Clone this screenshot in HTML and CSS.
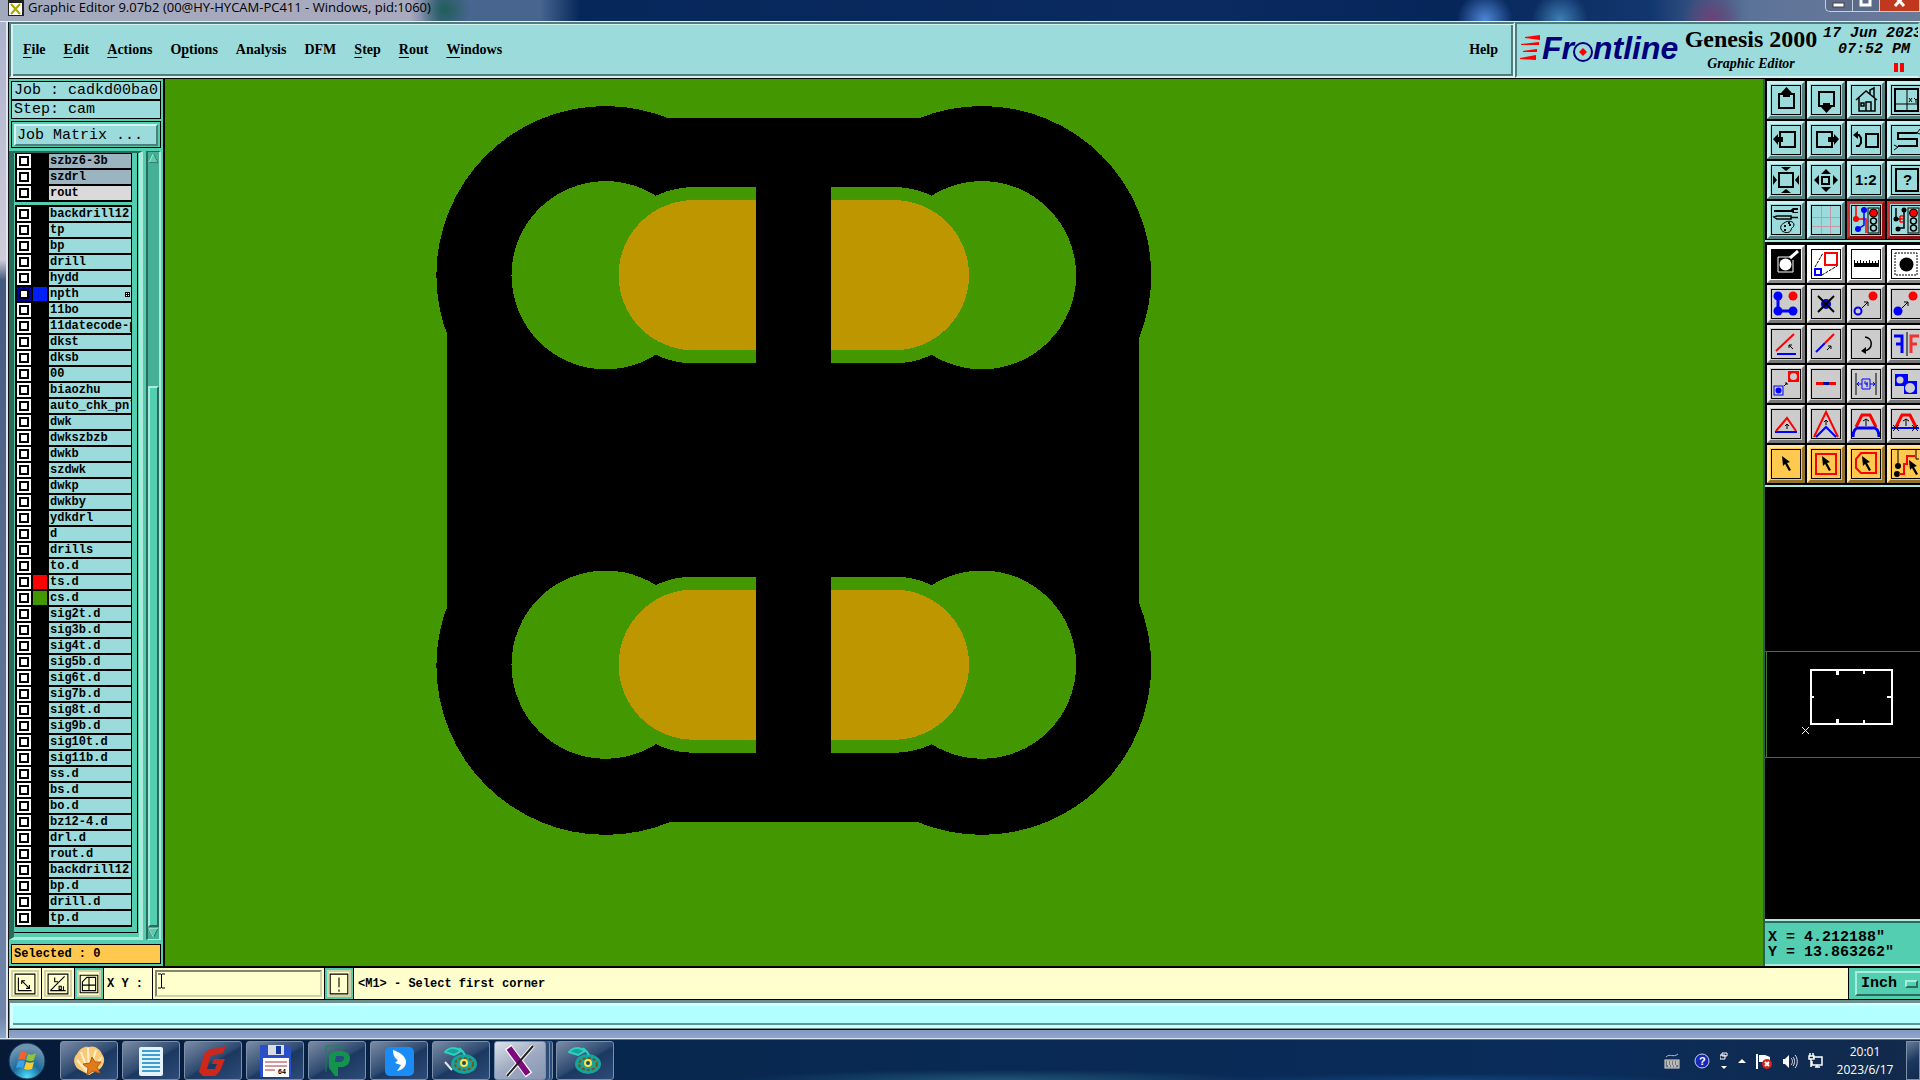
FILE: index.html
```html
<!DOCTYPE html>
<html lang="en">
<head>
  <meta charset="utf-8">
  <title>Graphic Editor</title>
  <link rel="stylesheet" href="styles.css">
</head>
<body>
  <div class="window">
    <header class="titlebar">
      <svg class="title-icon" viewBox="0 0 16 16"><rect width="16" height="16" fill="#222"/><rect x="1" y="3" width="13" height="12" fill="#fff"/><path d="M3 4L12 14M12 4L3 14" stroke="#a8a800" stroke-width="2"/></svg>
      <span class="title-text">Graphic Editor 9.07b2 (00@HY-HYCAM-PC411 - Windows, pid:1060)</span>
      <div class="window-controls">
        <button aria-label="Minimize"><svg viewBox="0 0 14 12"><rect x="1" y="3" width="11" height="4" fill="#fff" stroke="#444"/></svg></button>
        <button aria-label="Maximize"><svg viewBox="0 0 14 12"><rect x="2" y="-3" width="9" height="8" fill="none" stroke="#fff" stroke-width="3"/></svg></button>
        <button class="close" aria-label="Close"><svg viewBox="0 0 14 12"><path d="M2 -4L11 6M11 -4L2 6" stroke="#fff" stroke-width="3"/></svg></button>
      </div>
    </header>

    <div class="top">
      <nav class="menubar">
        <button><u>F</u>ile</button>
        <button><u>E</u>dit</button>
        <button><u>A</u>ctions</button>
        <button>O<u>p</u>tions</button>
        <button>Analysis</button>
        <button>DFM</button>
        <button><u>S</u>tep</button>
        <button><u>R</u>out</button>
        <button><u>W</u>indows</button>
        <button class="help">Help</button>
      </nav>
      <div class="brand">
        <svg class="logo" viewBox="0 0 162 50">
          <g fill="#f00"><path d="M5 13L20 11V16L5 14zM1 20L19 18V21L1 21zM3 27L17 25V28L3 28zM0 34L16 31V36L0 35z"/></g>
          <g class="logo-text"><text x="22" y="35">Fr</text><text x="73" y="35">ntline</text></g>
          <circle cx="63" cy="28" r="9" fill="none" stroke="#00007b" stroke-width="2"/>
          <path d="M63 24L67 28L63 32L59 28z" fill="#f00"/>
        </svg>
        <div class="product">
          <div class="product-name">Genesis 2000</div>
          <div class="product-sub">Graphic Editor</div>
        </div>
        <div class="datetime">
          <div>17 Jun 2023</div>
          <div>07:52 PM</div>
          <svg class="pause" viewBox="0 0 10 9"><path d="M0 0H4V9H0zM6 0H10V9H6z" fill="#f00"/></svg>
        </div>
      </div>
    </div>

    <main class="work">
      <aside class="sidebar">
        <div class="field">Job : cadkd00ba0</div>
        <div class="field">Step: cam</div>
        <div class="matrix"><button>Job Matrix ...</button></div>
        <div class="layers">
          <div class="layer-view">
            <div class="layer-group top-group" id="boardLayers"></div>
            <div class="layer-group" id="miscLayers"></div>
          </div>
          <div class="scrollbar">
            <svg viewBox="0 0 12 12"><rect width="12" height="12" fill="#46b096"/><path d="M6 1L11 11H1z" fill="#54ceb0" stroke="#a9ecdc"/><path d="M6 1L11 11H1" fill="none" stroke="#2b6b5b"/></svg>
            <div class="thumb"></div>
            <svg viewBox="0 0 12 12"><rect width="12" height="12" fill="#46b096"/><path d="M1 1H11L6 11z" fill="#54ceb0" stroke="#2b6b5b"/><path d="M11 1H1L6 11" fill="none" stroke="#a9ecdc"/></svg>
          </div>
        </div>
        <div class="selected">Selected : 0</div>
      </aside>

      <section class="canvas">
        <svg viewBox="165 79 1598 886" shape-rendering="crispEdges" preserveAspectRatio="xMidYMid slice">
          <g fill="#000">
            <rect x="448" y="275" width="691" height="390"/>
            <rect x="606" y="118" width="376" height="703"/>
            <circle cx="606" cy="275" r="169"/>
            <circle cx="982" cy="275" r="169"/>
            <circle cx="606" cy="665" r="169"/>
            <circle cx="982" cy="665" r="169"/>
          </g>
          <g fill="#439700">
            <circle cx="606" cy="275" r="94"/>
            <circle cx="982" cy="275" r="94"/>
            <circle cx="606" cy="664" r="94"/>
            <circle cx="982" cy="664" r="94"/>
            <rect x="606" y="187" width="376" height="176" rx="88"/>
            <rect x="606" y="576" width="376" height="176" rx="88"/>
          </g>
          <g fill="#be9700">
            <rect x="619" y="200" width="350" height="150" rx="75"/>
            <rect x="619" y="589" width="350" height="150" rx="75"/>
          </g>
          <rect x="756" y="150" width="75" height="640"/>
        </svg>
      </section>

      <aside class="tools">
        <div class="toolgroup">
          <button class="tool" aria-label="Pan up"><svg viewBox="1 1 28 28"><rect x="8" y="9" width="15" height="14" fill="none" stroke="#000" stroke-width="2"/><path d="M15.500 2L21 8H19V12H12V8H10z"/></svg></button>
          <button class="tool" aria-label="Pan down"><svg viewBox="1 1 28 28"><rect x="8" y="7" width="15" height="14" fill="none" stroke="#000" stroke-width="2"/><path d="M15.500 28L21 22H19V18H12V22H10z"/></svg></button>
          <button class="tool" aria-label="Home"><svg viewBox="1 1 28 28"><path d="M5 15L15 6L26 15M8 13V26H24V13M15 26V17H20V26M19 9V5L23 3V12M10 18H13V21H10z" fill="none" stroke="#000" stroke-width="1.500"/></svg></button>
          <button class="tool" aria-label="Zoom to coordinates"><svg viewBox="1 1 28 28"><rect x="4" y="4" width="23" height="22" fill="none" stroke="#000" stroke-width="2"/><path d="M16 4V26M4 19H27M18 13L21 17M21 13L18 17M23 13L25 15L27 13M25 15V18" fill="none" stroke="#000"/></svg></button>

          <button class="tool" aria-label="Pan left"><svg viewBox="1 1 28 28"><rect x="9" y="7" width="15" height="15" fill="none" stroke="#000" stroke-width="2"/><path d="M2 14L7 9V12H12V17H7V20z"/></svg></button>
          <button class="tool" aria-label="Pan right"><svg viewBox="1 1 28 28"><rect x="6" y="7" width="15" height="15" fill="none" stroke="#000" stroke-width="2"/><path d="M28 14L23 9V12H17V17H23V20z"/></svg></button>
          <button class="tool" aria-label="Previous view"><svg viewBox="1 1 28 28"><rect x="15" y="9" width="12" height="13" fill="none" stroke="#000" stroke-width="2"/><path d="M5 21H8L10 18V13L8 10H5" fill="none" stroke="#000" stroke-width="2"/><path d="M2 10L7 6V14z"/></svg></button>
          <button class="tool" aria-label="Serpentine"><svg viewBox="1 1 28 28"><path d="M7 21H26V14H7V8H26" fill="none" stroke="#000" stroke-width="2"/><path d="M3 20L7 22L3 25M29 4L26 8L29 9" fill="none" stroke="#000"/></svg></button>

          <button class="tool" aria-label="Zoom in"><svg viewBox="1 1 28 28"><rect x="8" y="8" width="14" height="14" fill="none" stroke="#000" stroke-width="2"/><path d="M15 6L10 2H20zM15 24L10 28H20zM6 15L2 10V20zM24 15L28 10V20z"/></svg></button>
          <button class="tool" aria-label="Zoom out"><svg viewBox="1 1 28 28"><rect x="11" y="12" width="7" height="7" fill="none" stroke="#000" stroke-width="2"/><path d="M15 4L20 9H10zM15 27L10 22H20zM3 15L8 10V20zM27 15L22 10V20z"/></svg></button>
          <button class="tool" aria-label="Scale one to two"><svg viewBox="1 1 28 28"><text class="tool-text" x="4" y="20">1:2</text></svg></button>
          <button class="tool" aria-label="Query"><svg viewBox="1 1 28 28"><rect x="5" y="4" width="22" height="22" fill="none" stroke="#000" stroke-width="2"/><text class="tool-text" x="12" y="20">?</text></svg></button>

          <button class="tool" aria-label="Setup"><svg viewBox="1 1 28 28"><path d="M3 6H21" stroke="#000" stroke-width="2"/><path d="M27 3H22L19 5.500L22 8H27V7H23V5H27z"/><path d="M3 12L6 11H20V14H6zM20 12.500H27" fill="none" stroke="#000" stroke-width="1.500"/><path d="M13 18C17 15 23 16 23 20C23 23 20 22 20 25C19 29 11 28 10 24C9 21 11 19 13 18z" fill="none" stroke="#000"/><path d="M13 21H15M17 18H19M13 25H15M18 20H20" stroke="#000" stroke-width="2"/></svg></button>
          <button class="tool" aria-label="Grid"><svg viewBox="1 1 28 28" shape-rendering="crispEdges"><path d="M10 1V29M19 1V29M1 12H29M1 21H29" stroke="#c49aa8"/></svg></button>
          <button class="tool red" aria-label="Nets on"><svg viewBox="1 1 28 28"><path d="M5 1V14H15V28" fill="none" stroke="#f00" stroke-width="1.500"/><path d="M13 5V20L7 24" fill="none" stroke="#00f" stroke-width="1.500"/><circle cx="5" cy="14" r="3" fill="#f00"/><circle cx="13" cy="5" r="3" fill="#00f"/><circle cx="7" cy="24" r="3" fill="#00f"/><rect x="17" y="3" width="11" height="25" fill="none" stroke="#000"/><circle cx="22.500" cy="8" r="4" fill="#f00" stroke="#000"/><circle cx="22.500" cy="16" r="3" fill="none" stroke="#000" stroke-width="1.500"/><circle cx="22.500" cy="23" r="3" fill="none" stroke="#000" stroke-width="1.500"/></svg></button>
          <button class="tool red" aria-label="Nets off"><svg viewBox="1 1 28 28"><path d="M5 3V14M13 5V23H7M5 14H9" fill="none" stroke="#000" stroke-width="1.500"/><path d="M9 11V17M9 11H12M9 14H12M9 17H12" stroke="#f00" stroke-width="1.500"/><circle cx="5" cy="14" r="2.500"/><circle cx="13" cy="5" r="2.500"/><circle cx="7" cy="24" r="2.500"/><rect x="17" y="3" width="11" height="25" fill="none" stroke="#000"/><circle cx="22.500" cy="8" r="4" fill="#f00" stroke="#000"/><circle cx="22.500" cy="16" r="3" fill="none" stroke="#000" stroke-width="1.500"/><circle cx="22.500" cy="23" r="3" fill="none" stroke="#000" stroke-width="1.500"/></svg></button>
        </div>
        <div class="toolgroup edit">
          <button class="tool white" aria-label="Add feature"><svg viewBox="1 1 28 28"><rect x="1" y="1" width="28" height="28"/><path d="M7 8H19M22 11V23H7V8" fill="none" stroke="#fff"/><circle cx="14.500" cy="15.500" r="6" fill="#fff"/><path d="M19 9L27 2" stroke="#fff" stroke-width="3"/></svg></button>
          <button class="tool white" aria-label="Scale feature"><svg viewBox="1 1 28 28"><path d="M4 18L12 4M11 26L26 17" stroke="#000" stroke-dasharray="3 1"/><rect x="14" y="4" width="12" height="12" fill="none" stroke="#f00" stroke-width="2"/><rect x="4" y="20" width="6" height="6" fill="none" stroke="#00f" stroke-width="2"/></svg></button>
          <button class="tool white" aria-label="Measure"><svg viewBox="1 1 28 28" shape-rendering="crispEdges"><path d="M3 18H28V11H27V14H25V12H24V14H22V12H21V14H19V11H18V14H16V12H15V14H13V12H12V14H10V11H9V14H7V12H6V14H4V11H3z"/></svg></button>
          <button class="tool white" aria-label="Select feature"><svg viewBox="1 1 28 28"><rect x="4" y="4" width="22" height="22" fill="none" stroke="#000" stroke-dasharray="2 1"/><circle cx="15.500" cy="15.500" r="7"/></svg></button>

          <button class="tool grey" aria-label="Connect"><svg viewBox="1 1 28 28"><path d="M7 7V22H23" fill="none" stroke="#00f" stroke-width="3"/><g fill="#00f"><circle cx="7" cy="7" r="4.500"/><circle cx="7" cy="22" r="4.500"/><circle cx="22" cy="22" r="4.500"/></g><circle cx="22" cy="7" r="4.500" fill="#f00"/></svg></button>
          <button class="tool grey" aria-label="Delete"><svg viewBox="1 1 28 28"><circle cx="15" cy="15" r="5" fill="#0000d8"/><path d="M7 7L23 23M23 7L7 23" stroke="#000" stroke-width="2"/></svg></button>
          <button class="tool grey" aria-label="Move"><svg viewBox="1 1 28 28"><circle cx="7" cy="22" r="3.500" fill="none" stroke="#00f" stroke-width="2"/><circle cx="22" cy="7" r="4.500" fill="#f00"/><path d="M11 19L17 13M13 13H17V17" fill="none" stroke="#000"/></svg></button>
          <button class="tool grey" aria-label="Copy"><svg viewBox="1 1 28 28"><circle cx="7" cy="22" r="4.500" fill="#00f"/><circle cx="22" cy="7" r="4.500" fill="#f00"/><path d="M11 19L17 13M13 13H17V17" fill="none" stroke="#000"/></svg></button>

          <button class="tool grey" aria-label="Rotate line"><svg viewBox="1 1 28 28"><path d="M5 22L23 5" stroke="#f00" stroke-width="2"/><path d="M6 25H25" stroke="#00f" stroke-width="2"/><path d="M22 20L18 16M18 19V16H21" fill="none" stroke="#000"/></svg></button>
          <button class="tool grey" aria-label="Stretch line"><svg viewBox="1 1 28 28"><path d="M5 23L14 14" stroke="#00f" stroke-width="2"/><path d="M14 14L23 5" stroke="#f00" stroke-width="2"/><path d="M16 21L20 17M17 17H20V20" fill="none" stroke="#000"/></svg></button>
          <button class="tool grey" aria-label="Rotate"><svg viewBox="1 1 28 28"><path d="M14 8C22 9 23 20 13 22" fill="none" stroke="#000" stroke-width="1.500"/><path d="M10 22L15 18V25z"/></svg></button>
          <button class="tool grey" aria-label="Mirror"><svg viewBox="1 1 28 28"><path d="M3 7H11V24M5 15H11" fill="none" stroke="#00f" stroke-width="3"/><path d="M16 3V27" stroke="#000"/><path d="M28 7H20V24M20 15H26" fill="none" stroke="#e33" stroke-width="3"/></svg></button>

          <button class="tool grey" aria-label="Replace"><svg viewBox="1 1 28 28"><rect x="3" y="17" width="9" height="9" fill="none" stroke="#00f"/><circle cx="7.500" cy="21.500" r="3" fill="#00f"/><rect x="17" y="2" width="11" height="11" fill="#f00"/><circle cx="22.500" cy="7.500" r="3.500" fill="#ccc"/><path d="M13 17L16 14M14 14H16V16" fill="none" stroke="#000"/></svg></button>
          <button class="tool grey" aria-label="Break line"><svg viewBox="1 1 28 28"><path d="M5 14.500H25" stroke="#f00" stroke-width="3"/><rect x="12" y="13" width="6" height="3" fill="#00a"/></svg></button>
          <button class="tool grey" aria-label="Spacing"><svg viewBox="1 1 28 28"><path d="M5 4V26M25 4V26" stroke="#000"/><path d="M6 15H11M19 15H24M8 13L6 15L8 17M22 13L24 15L22 17M11 10H19V20H11zM14 12V15H17M16 13V18" fill="none" stroke="#00f"/></svg></button>
          <button class="tool grey" aria-label="Merge"><svg viewBox="1 1 28 28"><path d="M4 5H17V12H26V25H13V17H4z" fill="#00f"/><circle cx="9" cy="11" r="3.500" fill="#ccc"/><circle cx="19" cy="19" r="5" fill="#ccc"/></svg></button>

          <button class="tool grey" aria-label="Move segment"><svg viewBox="1 1 28 28"><path d="M5 22L16 9L25 22" fill="none" stroke="#f00" stroke-width="2"/><path d="M4 23H26" stroke="#00f" stroke-width="2"/><path d="M16 20V15M14 17L16 15L18 17" fill="none" stroke="#000"/></svg></button>
          <button class="tool grey" aria-label="Move corner"><svg viewBox="1 1 28 28"><path d="M3 28L15 3L27 28" fill="none" stroke="#f00" stroke-width="2"/><path d="M5 28L15 18L25 28" fill="none" stroke="#00f" stroke-width="2"/><path d="M15 16V11M13 13L15 11L17 13" fill="none" stroke="#000"/></svg></button>
          <button class="tool grey" aria-label="Offset segment"><svg viewBox="1 1 28 28"><path d="M5 18L11 6H19L25 18" fill="none" stroke="#f00" stroke-width="3"/><path d="M2 28C2 23 4 20 6 19H24C26 20 28 23 28 28" fill="none" stroke="#00f" stroke-width="3"/><path d="M15 17V10M12 12L15 10L18 12" fill="none" stroke="#000"/></svg></button>
          <button class="tool grey" aria-label="Trim segment"><svg viewBox="1 1 28 28"><path d="M5 18L11 6H19L25 18" fill="none" stroke="#f00" stroke-width="3"/><path d="M1 19H28" stroke="#00f" stroke-width="2"/><path d="M15 17V10M12 12L15 10L18 12M2 16L8 22M8 16L2 22M21 16L27 22M27 16L21 22" fill="none" stroke="#000"/></svg></button>

          <button class="tool amber" aria-label="Select"><svg viewBox="1 1 28 28"><path d="M11 7L19 13L16 14L20 21L18 22L14 15L12 17z"/></svg></button>
          <button class="tool amber" aria-label="Select rectangle"><svg viewBox="1 1 28 28"><rect x="5" y="5" width="20" height="20" fill="none" stroke="#f00" stroke-width="2"/><path d="M11 7L19 13L16 14L20 21L18 22L14 15L12 17z"/></svg></button>
          <button class="tool amber" aria-label="Select polygon"><svg viewBox="1 1 28 28"><path d="M10 4H25V24H10L5 19V10z" fill="none" stroke="#f00" stroke-width="2"/><path d="M11 7L19 13L16 14L20 21L18 22L14 15L12 17z"/></svg></button>
          <button class="tool amber" aria-label="Select net"><svg viewBox="1 1 28 28"><path d="M7 1V16M25 1V10H28" stroke="#000" fill="none"/><circle cx="7" cy="17" r="3"/><circle cx="6" cy="25" r="3"/><path d="M8 25H13V15H16V7H24" fill="none" stroke="#f00" stroke-width="2"/><path d="M18 11L26 17L23 18L27 25L25 26L21 19L19 21z"/></svg></button>
        </div>
        <div class="overview">
          <svg viewBox="0 0 155 108" shape-rendering="crispEdges">
            <path d="M0 1H155M0 107H155M1 1V107" stroke="#3f7a1c" fill="none"/>
            <path d="M46 20H127V74H46z" stroke="#fff" stroke-width="2" fill="none"/>
            <path d="M72 21V25M72 69V73" stroke="#fff" stroke-width="3"/>
            <path d="M99 21V24M99 70V73M47 47H49M122 47H126" stroke="#fff" stroke-width="2"/>
            <path d="M37 77L44 84M44 77L37 84" stroke="#fff"/>
          </svg>
        </div>
        <div class="coords">X = 4.212188"<br>Y = 13.863262"</div>
      </aside>
    </main>

    <div class="command">
      <button class="cmd" aria-label="Diagonal"><svg viewBox="0 0 20 20"><path d="M1 1H19V19H1zM4 4V16H16M7 7L14 14M7 10V7H10M11 14H14V11" fill="none" stroke="#000"/></svg></button>
      <button class="cmd" aria-label="Angle"><svg viewBox="0 0 20 20"><path d="M1 1H19V19H1zM3 16L16 3M3 16H17M7 4V8H10M11 12H13V15H11zM15 12V16" fill="none" stroke="#000"/></svg></button>
      <button class="cmd teal" aria-label="Snap to grid"><svg viewBox="0 0 20 20"><path d="M2 2H18V18H2zM4 8L8 4H16V16H4zM10 4V16M4 11H16" fill="none" stroke="#000"/></svg></button>
      <label class="xy-label" for="xy">X Y :</label>
      <div class="xy-box"><input id="xy" type="text">
        <svg class="caret" viewBox="0 0 7 16"><path d="M0 1H3M4 1H7M3.500 1V15M0 15H3M4 15H7" stroke="#000"/></svg></div>
      <button class="cmd teal alert" aria-label="Alert"><svg viewBox="0 0 20 20"><path d="M2 1H18V19H2zM10 4V13M10 15V17" fill="none" stroke="#000"/></svg></button>
      <div class="message">&lt;M1&gt; - Select first corner</div>
      <div class="unit"><button>Inch<i></i></button></div>
    </div>
    <div class="status"><div></div></div>
  </div>

  <footer class="taskbar">
    <button class="start" aria-label="Start"><svg viewBox="0 0 38 38">
      <defs><radialGradient id="orb" cx="50%" cy="95%" r="80%"><stop offset="0" stop-color="#4fe0ff"/><stop offset="0.5" stop-color="#1b6b9c"/><stop offset="1" stop-color="#6d93ae"/></radialGradient></defs>
      <circle cx="19" cy="19" r="18" fill="url(#orb)" stroke="#12304f"/>
      <path d="M12 11C15 9 17 10 19 11L17 18C15 17 13 17 10 18z" fill="#f2622b"/><path d="M20 12C23 13 25 13 28 11L26 18C23 20 21 19 18 18z" fill="#90c43c"/><path d="M10 19C13 18 15 18 17 19L15 26C13 25 11 25 8 26z" fill="#3fa0e6"/><path d="M18 20C21 21 23 21 26 20L24 27C21 28 19 28 16 27z" fill="#fccb2f"/>
    </svg></button>
    <nav class="tasks">
      <button aria-label="Shell"><svg viewBox="0 0 34 34"><path d="M17 31L6 25C1 20 1 14 5 10C8 4 13 2 17 3C22 1 28 5 30 10C34 15 32 21 28 25z" fill="#f7c978"/><path d="M17 30L5 16M17 30L9 8M17 30L16 4M17 30L24 6M17 30L30 13" stroke="#fff0c8" stroke-width="2"/><path d="M20 13L23 18L29 18L25 23L28 29L21 27L15 31L16 24L11 20L18 19z" fill="#e27a1c" stroke="#b35b0c"/></svg></button>
      <button aria-label="Notepad"><svg viewBox="0 0 34 34"><rect x="5" y="3" width="24" height="29" rx="2" fill="#e4f3fb"/><path d="M8 7H26M8 11H26M8 15H26M8 19H26M8 23H26M8 27H26" stroke="#3b9fd0" stroke-width="2"/></svg></button>
      <button aria-label="G tool"><svg viewBox="0 0 34 34"><path d="M30 1L27 9C21 11 16 10 14 13L11 25H19L21 20H16L18 15H29L24 27L19 32H7L3 28L8 10L14 5C20 4 26 5 30 1z" fill="#d0271c"/></svg></button>
      <button aria-label="Save"><svg viewBox="0 0 34 34"><path d="M2 1H30L33 4V33H2z" fill="#2a50c8"/><rect x="10" y="1" width="16" height="10" fill="#d9dde6"/><rect x="18" y="2" width="5" height="8" fill="#123a9c"/><rect x="5" y="14" width="26" height="19" fill="#fff"/><path d="M7 18H29M7 22H29M7 26H17" stroke="#a33"/><text class="disk-text" x="20" y="30">64</text></svg></button>
      <button aria-label="P tool"><svg viewBox="0 0 34 34"><path d="M6 28V2H22V6" fill="none" stroke="#0c8b45"/><path d="M15 32L9 24V12C9 6 30 4 30 14C30 22 23 24 18 23V32z" fill="#13934b"/><path d="M16 12H22C26 13 24 18 19 18H15z" fill="#274b7a"/></svg></button>
      <button aria-label="Messenger"><svg viewBox="0 0 34 34"><rect x="3" y="3" width="29" height="29" rx="5" fill="#1b8cf5"/><path d="M11 6C17 8 24 12 24 18C24 23 20 26 15 27L19 21L13 19L16 16C12 14 11 10 11 6z" fill="#fff"/></svg></button>
      <button aria-label="Genesis"><svg viewBox="0 0 34 34"><ellipse cx="20" cy="20" rx="13" ry="10" fill="#16a39b"/><ellipse cx="20" cy="20" rx="9" ry="6" fill="none" stroke="#77531b" stroke-width="2" stroke-dasharray="3 2"/><circle cx="20" cy="19" r="3" fill="#1c4b66" stroke="#ffe24a" stroke-width="2"/><path d="M1 8C5 3 12 3 17 7L10 11zM15 4L19 8L21 11" stroke="#2fd0c4" stroke-width="2" fill="#16a39b"/><path d="M1 18L8 26" stroke="#dfe6ec" stroke-width="2"/></svg></button>
      <button class="active" aria-label="X server"><svg viewBox="0 0 34 34"><path d="M5 3L26 31" stroke="#fff" stroke-width="8"/><path d="M30 2L4 32" stroke="#fff" stroke-width="4"/><path d="M6 4L25 30" stroke="#7c0a7c" stroke-width="6"/><path d="M30 2L4 32" stroke="#222" stroke-width="2"/></svg></button>
      <button aria-label="Genesis"><svg viewBox="0 0 34 34"><ellipse cx="20" cy="20" rx="13" ry="10" fill="#16a39b"/><ellipse cx="20" cy="20" rx="9" ry="6" fill="none" stroke="#77531b" stroke-width="2" stroke-dasharray="3 2"/><circle cx="20" cy="19" r="3" fill="#1c4b66" stroke="#ffe24a" stroke-width="2"/><path d="M1 8C5 3 12 3 17 7L10 11zM15 4L19 8L21 11" stroke="#2fd0c4" stroke-width="2" fill="#16a39b"/></svg></button>
    </nav>
    <div class="tray">
      <svg class="keyboard" viewBox="0 0 16 16"><path d="M2 4C6 0 9 5 14 1" stroke="#bbb" fill="none"/><rect x="1" y="7" width="14" height="8" fill="#777" stroke="#ddd"/><path d="M3 9H14M3 11H14M4 13H12" stroke="#fff" stroke-dasharray="2 1"/></svg>
      <svg class="qmark" viewBox="0 0 16 16"><circle cx="8" cy="8" r="7" fill="#1727b8" stroke="#c8d0f4"/><text class="help-text" x="5" y="12">?</text></svg>
      <svg class="restore" viewBox="0 0 8 20"><path d="M2 2H7V5H2zM0 4H5V8H0z" fill="none" stroke="#fff"/><path d="M1 15H7L4 18z" fill="#fff"/></svg>
      <svg class="up" viewBox="0 0 8 16"><path d="M0 10H8L4 6z" fill="#fff"/></svg>
      <svg class="flag" viewBox="0 0 16 16"><path d="M1 1V16" stroke="#fff" stroke-width="2"/><path d="M3 2H9L14 4V9H3z" fill="#fff"/><circle cx="11" cy="11" r="5" fill="#d8221c"/><path d="M9 9L13 13M13 9L9 13" stroke="#fff" stroke-width="2"/></svg>
      <svg class="sound" viewBox="0 0 16 16"><path d="M1 6H3L7 2V15L3 11H1z" fill="#fff"/><path d="M9 5C11 7 11 10 9 12M11 4C13 6 13 11 11 13M13 2C16 5 16 12 13 15" stroke="#dde" fill="none"/></svg>
      <svg class="net" viewBox="0 0 16 16"><path d="M5 4H14V12H4V8M7 14H12M9 12V14M2 0V3M5 0V3M1 3H6V6H1zM3 6V14" fill="none" stroke="#fff" stroke-width="1.500"/></svg>
      <div class="clock">20:01<br>2023/6/17</div>
      <button class="desktop" aria-label="Show desktop"></button>
    </div>
  </footer>
  <script src="layers.js"></script>
</body>
</html>
```

FILE: styles.css
```css
* {
  box-sizing: border-box;
}
body {
  margin: 0;
  height: 100vh;
  display: flex;
  flex-direction: column;
  overflow: hidden;
  background-color: #0b2347;
  color: #000;
  font: bold 12px/16px "Liberation Mono", monospace;
}
button {
  margin: 0;
  padding: 0;
  border: none;
  border-radius: 0;
  background: none;
  color: inherit;
  font: inherit;
}
svg {
  display: block;
}

/* window frame */
.window {
  flex: 1;
  min-height: 0;
  display: flex;
  flex-direction: column;
  padding: 0 0 8px 9px;
  border-bottom: 1px solid #d9e4f2;
  background: linear-gradient(90deg, transparent 6px, #dfe6f0 6px, #dfe6f0 8px, #111 8px, #111 9px, transparent 9px),
    linear-gradient(#a9afcb, #d0cdda 25%, #44597f 27%, #56688c 50%, #7186aa 98%, #8ea5cc);
}
.titlebar {
  flex: none;
  display: flex;
  align-items: flex-start;
  gap: 4px;
  height: 22px;
  margin-left: -9px;
  padding-left: 8px;
  overflow: hidden;
  border-bottom: 1px solid #e5edf5;
  background:
    radial-gradient(circle at 445px 10px, #0f5a40aa, transparent 25px),
    radial-gradient(circle at 1485px 20px, #4f86d8, transparent 28px),
    radial-gradient(circle at 1560px 20px, #3f80b4, transparent 28px),
    radial-gradient(circle at 1712px 20px, #6c4274, transparent 30px),
    linear-gradient(90deg, #a3a9bd, #a9aabd 410px, #47658f 440px, #47658f 540px, #06275a 580px, #0b2b60 1200px, #06265a 1450px, #12366e 1650px, #5c7398 1750px, #6c7a98);
}
.title-icon {
  width: 16px;
  height: 16px;
}
.title-text {
  flex: 1;
  font: 13px/14px "Open Sans", sans-serif;
}
.window-controls {
  display: flex;
  height: 12px;
  border: 1px solid #c4cfdf;
  border-top: none;
  border-right: none;
  border-radius: 0 0 0 5px;
  background-color: #5c6b88;
}
.window-controls button {
  width: 27px;
  border-right: 1px solid #c4cfdf;
}
.window-controls button svg {
  width: 14px;
  height: 12px;
  margin: 0 auto;
}
.window-controls .close {
  width: 40px;
  background-color: #c0391f;
}

/* menu and brand */
.top {
  flex: none;
  display: flex;
  height: 57px;
  border-bottom: 1px solid #000;
  background-color: #9cdbdb;
}
.menubar {
  flex: 1;
  display: flex;
  align-items: center;
  gap: 18px;
  padding: 0 15px 0 12px;
  border: 2px solid #4f7c7c;
  border-color: #4f7c7c #d4f4f4 #d4f4f4 #4f7c7c;
  box-shadow: inset 2px 1px #d4f4f4, inset -2px -2px #4f7c7c;
}
.menubar button {
  font: bold 14px/18px "Liberation Serif", serif;
}
.menubar u {
  text-underline-offset: 3px;
}
.menubar .help {
  margin-left: auto;
}
.brand {
  flex: none;
  display: flex;
  width: 405px;
  padding-left: 3px;
  overflow: hidden;
  white-space: nowrap;
  border: 2px solid #4f7c7c;
  border-color: #4f7c7c transparent #d4f4f4 #4f7c7c;
}
.logo {
  flex: none;
  width: 162px;
  height: 50px;
}
.logo-text {
  font: italic bold 32px "Liberation Sans", sans-serif;
  fill: #00007b;
}
.product {
  flex: none;
  width: 138px;
  margin-right: 3px;
  text-align: center;
}
.product-name {
  font: bold 24px/30px "Liberation Serif", serif;
}
.product-sub {
  font: italic bold 14px/20px "Liberation Serif", serif;
}
.datetime {
  flex: none;
  width: 99px;
  padding-top: 2px;
  text-align: right;
  font: italic bold 15px/16px "Liberation Mono", monospace;
}
.datetime div + div {
  padding-right: 12px;
}
.pause {
  width: 10px;
  height: 9px;
  margin: 5px 18px 0 auto;
}

/* work area */
.work {
  flex: 1;
  min-height: 0;
  display: flex;
}
.sidebar {
  flex: none;
  display: flex;
  flex-direction: column;
  width: 156px;
  padding: 2px 2px 2px 2px;
  border-right: 2px solid #000;
  background-color: #54ceb0;
}
.field {
  height: 19px;
  padding-left: 2px;
  overflow: hidden;
  border: 1px solid #000;
  background-color: #9cdbdb;
  font-size: 15px;
  line-height: 18px;
  font-weight: normal;
  white-space: nowrap;
}
.matrix {
  height: 27px;
  margin: 2px 0 3px;
  padding: 2px;
  border: 1px solid #000;
}
.matrix button {
  width: 100%;
  height: 22px;
  padding-left: 1px;
  border: 2px solid;
  border-color: #d4f4f4 #4f7c7c #4f7c7c #d4f4f4;
  background-color: #9cdbdb;
  text-align: left;
  font-size: 15px;
  line-height: 17px;
  font-weight: normal;
}
.layers {
  flex: 1;
  min-height: 0;
  display: flex;
  gap: 3px;
  margin-left: -2px;
}
.layer-view {
  flex: 1;
  min-width: 0;
  overflow: hidden;
  border: 2px solid #2b6b5b;
  border-width: 2px 4px 3px 5px;
  border-color: #2b6b5b #a9ecdc #a9ecdc #2b6b5b;
  box-shadow: inset -1px -4px #54ceb0, inset -2px -5px #000;
}
.layer-group {
  width: 117px;
  margin: 0 0 3px 1px;
  padding: 1px 1px 1px 2px;
  background-color: #000;
}
.top-group {
  padding-top: 0;
}
.layer {
  display: flex;
  gap: 2px;
  height: 16px;
  padding: 1px 0;
}
.layer input {
  flex: none;
  appearance: none;
  width: 14px;
  height: 14px;
  margin: 0;
  border: 2px solid #fff;
  background-color: #fff;
  box-shadow: inset 0 0 0 2px #000;
}
.layer input:checked {
  border-color: #0000a8;
}
.swatch {
  flex: none;
  width: 14px;
}
.swatch.blue {
  background-color: #0020ff;
}
.swatch.red {
  background-color: #f00;
}
.swatch.green {
  background-color: #439700;
}
.name {
  position: relative;
  flex: 1;
  padding-left: 1px;
  overflow: hidden;
  background-color: #9cdbdb;
  line-height: 14px;
  white-space: nowrap;
}
.name.drill {
  background-color: #9cb4c0;
}
.name.rout {
  background-color: #dadada;
}
.name svg {
  position: absolute;
  top: 5px;
  right: 1px;
  width: 5px;
  height: 5px;
}
.scrollbar {
  flex: none;
  display: flex;
  flex-direction: column;
  width: 15px;
  border: 2px solid #2b6b5b;
  border-width: 1px 2px 1px 2px;
  border-color: #2b6b5b #a9ecdc #a9ecdc #2b6b5b;
  background-color: #46b096;
}
.scrollbar svg {
  flex: none;
  width: 11px;
  height: 12px;
}
.thumb {
  flex: 1;
  margin-top: 222px;
  border: 2px solid;
  border-color: #a9ecdc #2b6b5b #2b6b5b #a9ecdc;
  background-color: #54ceb0;
}
.selected {
  height: 20px;
  margin-top: 4px;
  padding-left: 2px;
  border: 1px solid #000;
  background-color: #ffc94f;
  line-height: 18px;
}
.canvas {
  flex: 1;
  min-width: 0;
  background-color: #439700;
}
.canvas svg {
  width: 100%;
  height: 100%;
}

/* tool panel */
.tools {
  flex: none;
  display: flex;
  flex-direction: column;
  width: 157px;
  overflow: hidden;
  border-left: 2px solid #2b5f55;
  background-color: #2b5f55;
}
.toolgroup {
  display: grid;
  grid-template-columns: repeat(4, 38px);
  gap: 2px;
  width: 170px;
  padding: 2px 2px 1px;
  border-bottom: 2px solid #a9ecdc;
  background-color: #000;
}
.edit {
  padding: 3px 2px 2px;
}
.tool {
  width: 38px;
  height: 38px;
  padding: 1px;
  border: 3px solid;
  border-color: #cdf1f1 #527f7f #527f7f #cdf1f1;
  background-color: #9cdbdb;
}
.tool svg {
  width: 30px;
  height: 30px;
  border: 1px solid #000;
}
.tool.red {
  border-color: #c33 #811 #811 #c33;
}
.tool.white {
  border-color: #fff #8a8a8a #8a8a8a #fff;
  background-color: #fff;
}
.tool.grey {
  border-color: #ededed #777 #777 #ededed;
  background-color: #ccc;
}
.tool.amber {
  border-color: #ffe6a8 #94722a #94722a #ffe6a8;
  background-color: #ffc94f;
}
.tool-text {
  font: bold 15px "Liberation Sans", sans-serif;
}
.overview {
  flex: 1;
  display: flex;
  align-items: center;
  padding-top: 2px;
  background-color: #000;
}
.overview svg {
  flex: none;
  width: 155px;
  height: 108px;
}
.coords {
  padding: 9px 2px 4px 3px;
  border-top: 2px solid #a9ecdc;
  border-bottom: 2px solid #a9ecdc;
  box-shadow: inset 0 2px #2b6b5b;
  background-color: #54ceb0;
  font-size: 15px;
  line-height: 15px;
}

/* command line */
.command {
  flex: none;
  display: flex;
  gap: 1px;
  height: 34px;
  padding-top: 2px;
  border-bottom: 1px solid #000;
  background-color: #000;
  line-height: 32px;
}
.cmd {
  display: flex;
  align-items: center;
  justify-content: center;
  width: 32px;
  border: 2px solid #ffffce;
  background-color: #ffffce;
  box-shadow: inset 0 0 0 2px #d2d2a8;
}
.cmd svg {
  flex: none;
  width: 22px;
  height: 22px;
}
.cmd.teal {
  width: 28px;
  border-color: #54ceb0;
}
.xy-label {
  width: 48px;
  padding-left: 3px;
  background-color: #ffffce;
}
.xy-box {
  position: relative;
  width: 171px;
  padding: 2px;
  background-color: #ffffce;
}
.xy-box input {
  display: block;
  width: 100%;
  height: 27px;
  border: 2px solid;
  border-color: #85856b #d2d2a8 #d2d2a8 #85856b;
  background-color: #ffffce;
  font: inherit;
}
.caret {
  position: absolute;
  left: 5px;
  top: 5px;
  width: 7px;
  height: 16px;
}
.message {
  flex: 1;
  padding-left: 4px;
  background-color: #ffffce;
}
.unit {
  width: 71px;
  padding: 3px 0 3px 6px;
  overflow: hidden;
  background-color: #54ceb0;
}
.unit button {
  display: flex;
  align-items: center;
  gap: 8px;
  width: 80px;
  height: 25px;
  padding-left: 4px;
  border: 2px solid;
  border-color: #a9ecdc #2b6b5b #2b6b5b #a9ecdc;
  font-size: 15px;
}
.unit i {
  width: 13px;
  height: 8px;
  border: 2px solid;
  border-color: #a9ecdc #2b6b5b #2b6b5b #a9ecdc;
}
.status {
  flex: none;
  height: 30px;
  padding: 3px 0 1px 1px;
  border-bottom: 1px solid #000;
  background-color: #6c8f8f;
}
.status div {
  height: 25px;
  border: 3px solid #d4ffff;
  border-right: none;
  border-bottom-color: #c8ffff;
  background-color: #b2ffff;
  box-shadow: inset 0 -2px #5f9696;
}

/* taskbar */
.taskbar {
  flex: none;
  display: flex;
  height: 41px;
  padding-top: 1px;
  border-top: 1px solid #5c6f86;
  background: radial-gradient(ellipse at 1000px 40px, #1f5577, transparent 260px),
    radial-gradient(ellipse at 1450px 40px, #0e4378, transparent 240px),
    linear-gradient(90deg, #061a38, #082850 700px, #0a2c5a 1600px, #122a4a);
}
.start {
  width: 60px;
  padding-left: 8px;
}
.start svg {
  width: 38px;
  height: 38px;
}
.tasks {
  display: flex;
  gap: 4px;
}
.tasks button {
  width: 58px;
  height: 39px;
  border: 1px solid #7c90ac;
  border-radius: 3px;
  background: linear-gradient(150deg, #7a8ba5, #2e4a70 50%, #1b3860 55%, #2d4c78);
}
.tasks svg {
  width: 34px;
  height: 34px;
  margin: 0 auto;
}
.tasks .active {
  width: 52px;
  margin-right: 6px;
  background: linear-gradient(150deg, #dde2ec, #9fabc2 50%, #8795b2);
  box-shadow: 3px 0 #2d4c78, 4px 0 #7c90ac, 6px 0 #2d4c78, 7px 0 #7c90ac;
}
.tray {
  display: flex;
  align-items: center;
  gap: 10px;
  margin-left: auto;
  color: #fff;
}
.tray svg {
  width: 16px;
  height: 16px;
}
.tray .keyboard {
  margin-right: 4px;
}
.tray .restore {
  width: 8px;
  height: 20px;
}
.tray .up {
  width: 8px;
}
.help-text {
  fill: #fff;
  font: bold 11px "Liberation Sans", sans-serif;
}
.disk-text {
  font: bold 7px "Liberation Sans", sans-serif;
}
.clock {
  width: 62px;
  text-align: center;
  font: 12px/18px "Open Sans", sans-serif;
}
.desktop {
  width: 14px;
  height: 39px;
  border: 1px solid #7c90ac;
  background: linear-gradient(150deg, #6a7b95, #1b3860 50%, #12294a);
}
```

FILE: layers.js
```javascript
var boardLayers = ["szbz6-3b", "szdrl", "rout"];
var miscLayers = ["backdrill12-1", "tp", "bp", "drill", "hydd", "npth", "11bo", "11datecode-p",
  "dkst", "dksb", "00", "biaozhu", "auto_chk_pnl", "dwk", "dwkszbzb", "dwkb", "szdwk", "dwkp",
  "dwkby", "ydkdrl", "d", "drills", "to.d", "ts.d", "cs.d", "sig2t.d", "sig3b.d", "sig4t.d",
  "sig5b.d", "sig6t.d", "sig7b.d", "sig8t.d", "sig9b.d", "sig10t.d", "sig11b.d", "ss.d", "bs.d",
  "bo.d", "bz12-4.d", "drl.d", "rout.d", "backdrill12-1", "bp.d", "drill.d", "tp.d"];

// color shown next to a displayed layer
var colors = { "npth": "blue", "ts.d": "red", "cs.d": "green" };
// background of the name, by layer type
var types = { "szbz6-3b": "drill", "szdrl": "drill", "rout": "rout" };

function addLayers(id, names) {
  var html = "";
  for (var i = 0; i < names.length; i++) {
    var name = names[i];
    var isWork = name === "npth";
    html += '<label class="layer"><input type="checkbox"' + (isWork ? " checked" : "") + '>' +
      '<span class="swatch ' + (colors[name] || "") + '"></span>' +
      '<span class="name ' + (types[name] || "") + '">' + name +
      (isWork ? '<svg viewBox="0 0 5 5"><path d="M0 0H5V5H0z"/><path d="M1 1H2V2H1zM3 1H4V2H3zM1 3H2V4H1zM3 3H4V4H3z" fill="#fff"/></svg>' : "") +
      '</span></label>';
  }
  document.getElementById(id).innerHTML = html;
}

addLayers("boardLayers", boardLayers);
addLayers("miscLayers", miscLayers);
```
